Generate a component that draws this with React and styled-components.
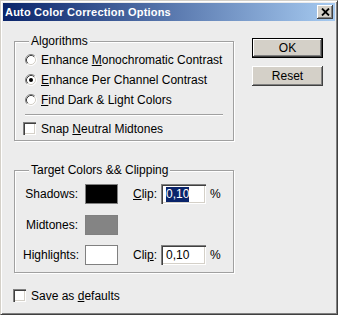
import styled, { createGlobalStyle } from "styled-components"

const Global = createGlobalStyle`
  html, body { margin: 0; padding: 0; background: #ececec; }
`

const Window = styled.div`
  width: 338px;
  height: 315px;
  box-sizing: border-box;
  background: #ececec;
  border: 1px solid;
  border-color: #d4d0c8 #404040 #404040 #d4d0c8;
  box-shadow: inset 1px 1px #fff, inset -1px -1px #808080;
  padding: 2px;
  display: flex;
  flex-direction: column;
  font: 12px "Liberation Sans", Arial, sans-serif;
  color: #000;
`

const TitleBar = styled.div`
  height: 18px;
  flex: none;
  display: flex;
  align-items: center;
  padding: 0 2px;
  background: linear-gradient(90deg, #0a246a, #a6caf0);
  color: #fff;
  font-weight: bold;
  font-size: 11px;
  letter-spacing: 0.2px;
`

const CloseBtn = styled.div`
  margin-left: auto;
  width: 16px;
  height: 14px;
  box-sizing: border-box;
  background: #d4d0c8;
  box-shadow: inset -1px -1px #404040, inset 1px 1px #fff, inset -2px -2px #808080;
  display: flex;
  align-items: center;
  justify-content: center;
`

const Body = styled.div`
  flex: 1;
  display: flex;
  flex-direction: column;
  padding: 14px 0 0 10px;
`

const Main = styled.div`
  display: flex;
  align-items: flex-start;
`

const LeftCol = styled.div`
  margin-left: 1px;
  width: 220px;
  display: flex;
  flex-direction: column;
  gap: 23px;
`

const Group = styled.fieldset`
  margin: 0;
  min-width: 0;
  box-sizing: border-box;
  width: 220px;
  border: 1px solid #a0a0a0;
  box-shadow: 1px 1px 0 #fff, inset 1px 1px 0 #fff;
  padding: ${p => p.$pad};
`

const Legend = styled.legend`
  padding: 0 2px;
  margin-left: ${p => p.$offset}px;
  line-height: 13px;
  background: #ececec;
`

const Option = styled.div`
  display: flex;
  align-items: center;
  gap: ${p => p.$gap || 4}px;
  height: ${p => p.$h || 20}px;
  margin-left: ${p => p.$shift || 0}px;
  white-space: nowrap;
`

const Separator = styled.div`
  border-top: 1px solid #a0a0a0;
  border-bottom: 1px solid #fff;
  margin: 4px 0 2px;
`

const CheckBox = styled.div`
  width: 13px;
  height: 13px;
  box-sizing: border-box;
  background: #fff;
  box-shadow: inset 1px 1px #808080, inset 2px 2px #404040, inset -1px -1px #fff, inset -2px -2px #d4d0c8;
  flex: none;
`

const Grid = styled.div`
  display: grid;
  grid-template-columns: 62px 48px 28px 49px auto;
  grid-auto-rows: 20px;
  row-gap: 10.5px;
  align-items: center;
`

const RowLabel = styled.div`
  text-align: right;
  padding-right: 7px;
  grid-column: 1;
`

const Swatch = styled.div`
  width: 33px;
  height: 20px;
  box-sizing: border-box;
  border: 1px solid #808080;
  background: ${p => p.$color};
`

const Field = styled.div`
  width: 45px;
  height: 20px;
  box-sizing: border-box;
  background: #fff;
  box-shadow: inset 1px 1px #808080, inset 2px 2px #404040, inset -1px -1px #fff, inset -2px -2px #d4d0c8;
  padding: 0 0 0 5px;
  display: flex;
  align-items: center;
`

const Value = styled.span`
  line-height: 15px;
  background: ${p => (p.$selected ? "#0a246a" : "transparent")};
  color: ${p => (p.$selected ? "#fff" : "#000")};
`

const RightCol = styled.div`
  margin: 3px 0 0 18px;
  display: flex;
  flex-direction: column;
  gap: 8px;
`

const Button = styled.div`
  width: 71px;
  height: 20px;
  box-sizing: border-box;
  background: #d4d0c8;
  border: ${p => (p.$default ? "1px solid #000" : "none")};
  box-shadow: inset -1px -1px #404040, inset 1px 1px #fff, inset -2px -2px #808080;
  display: flex;
  align-items: center;
  justify-content: center;
`

const Footer = styled.div`
  margin-top: 12px;
`

const Radio = ({ checked }) => (
  <svg width="12" height="12" viewBox="0 0 12 12" style={{ flex: "none" }}>
    <circle cx="6" cy="6" r="5" fill="#fff" />
    <path d="M9.89 2.11 A5.5 5.5 0 0 0 2.11 9.89" stroke="#808080" fill="none" />
    <path d="M9.89 2.11 A5.5 5.5 0 0 1 2.11 9.89" stroke="#fff" fill="none" />
    <path d="M9.18 2.82 A4.5 4.5 0 0 0 2.82 9.18" stroke="#404040" fill="none" />
    <path d="M9.18 2.82 A4.5 4.5 0 0 1 2.82 9.18" stroke="#d4d0c8" fill="none" />
    {checked && <circle cx="6" cy="6" r="2" fill="#000" />}
  </svg>
)

const CloseIcon = () => (
  <svg width="9" height="8" viewBox="0 0 9 8">
    <path d="M1 0.5 L8 7.5 M8 0.5 L1 7.5" stroke="#000" strokeWidth="1.8" />
  </svg>
)

export default function App() {
  return (
    <>
      <Global />
      <Window>
        <TitleBar>
          Auto Color Correction Options
          <CloseBtn>
            <CloseIcon />
          </CloseBtn>
        </TitleBar>
        <Body>
          <Main>
            <LeftCol>
              <Group $pad="2px 10px 1px">
                <Legend $offset={4}>Algorithms</Legend>
                <Option>
                  <Radio />
                  <span>Enhance <u>M</u>onochromatic Contrast</span>
                </Option>
                <Option>
                  <Radio checked />
                  <span><u>E</u>nhance Per Channel Contrast</span>
                </Option>
                <Option>
                  <Radio />
                  <span><u>F</u>ind Dark &amp; Light Colors</span>
                </Option>
                <Separator />
                <Option $h={21} $gap={5} $shift={-2}>
                  <CheckBox />
                  <span>Snap <u>N</u>eutral Midtones</span>
                </Option>
              </Group>
              <Group $pad="7px 8px 7px">
                <Legend $offset={6}>Target Colors &amp;&amp; Clipping</Legend>
                <Grid>
                  <RowLabel>Shadows:</RowLabel>
                  <Swatch $color="#000" />
                  <span><u>C</u>lip:</span>
                  <Field><Value $selected>0,10</Value></Field>
                  <span>%</span>

                  <RowLabel>Midtones:</RowLabel>
                  <Swatch $color="#848484" />
                  <span />
                  <span />
                  <span />

                  <RowLabel>Highlights:</RowLabel>
                  <Swatch $color="#fff" />
                  <span>Cli<u>p</u>:</span>
                  <Field><Value>0,10</Value></Field>
                  <span>%</span>
                </Grid>
              </Group>
            </LeftCol>
            <RightCol>
              <Button $default>OK</Button>
              <Button>Reset</Button>
            </RightCol>
          </Main>
          <Footer>
            <Option $h={21} $gap={5}>
              <CheckBox />
              <span>Save as <u>d</u>efaults</span>
            </Option>
          </Footer>
        </Body>
      </Window>
    </>
  )
}
